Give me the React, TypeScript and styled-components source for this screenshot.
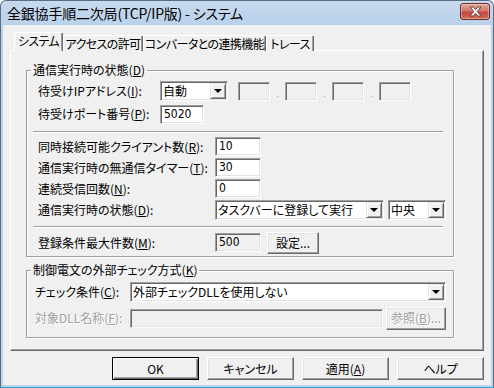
import React from "react";
import styled, { createGlobalStyle } from "styled-components";

const GlobalStyle = createGlobalStyle`
  html, body {
    margin: 0;
    padding: 0;
    background: #ffffff;
  }
  body {
    font-family: "Noto Sans CJK JP", "Noto Sans", sans-serif;
    font-size: 12px;
    font-feature-settings: "palt";
    color: #000;
  }
  u { text-decoration-thickness: 1px; text-underline-offset: 1px; }
`;

// window frame (win7 basic style)
const Window = styled.div`
  width: 494px;
  height: 388px;
  box-sizing: border-box;
  display: flex;
  flex-direction: column;
  border: 1px solid #5b6e83;
  border-bottom-color: #2aa6d6;
  border-radius: 6px 6px 0 0;
  background: linear-gradient(#c6d9ee, #b9d1ea 26px, #bcd4ec);
  padding: 0 2px 2px;
  overflow: hidden;
`;

const TitleBar = styled.div`
  height: 24px;
  flex: none;
  display: flex;
  align-items: center;
  justify-content: space-between;
  padding: 0 1px 0 4px;
`;

const Title = styled.span`
  font-size: 14px;
  line-height: 16px;
  letter-spacing: -0.2px;
`;

const CloseButton = styled.div`
  width: 30px;
  height: 17px;
  box-sizing: border-box;
  margin-top: -3px;
  border: 1px solid #6b2c26;
  border-radius: 3px;
  background: linear-gradient(#e4a598, #d07a6c 45%, #c2493d 55%, #cf6a5a);
  box-shadow: inset 0 0 0 1px rgba(255, 255, 255, 0.35);
  display: flex;
  align-items: center;
  justify-content: center;
`;

const Client = styled.div`
  flex: 1;
  background: #f0f0f0;
  display: flex;
  flex-direction: column;
  padding: 7px 7px 0;
`;

const TabStrip = styled.div`
  display: flex;
  align-items: flex-end;
  padding-left: 4px;
  height: 19px;
  margin-bottom: -1px;
  position: relative;
  z-index: 1;
`;

const Tab = styled.div<{ $w: number; $active?: boolean }>`
  width: ${(p) => p.$w}px;
  height: ${(p) => (p.$active ? 19 : 16)}px;
  box-sizing: border-box;
  background: #f0f0f0;
  border-top: 1px solid #ffffff;
  border-left: 1px solid #ffffff;
  border-right: 1px solid #696969;
  border-radius: 2px 2px 0 0;
  box-shadow: inset -1px 0 0 #a0a0a0;
  display: flex;
  align-items: center;
  justify-content: center;
  line-height: 14px;
  letter-spacing: -0.6px;
  padding-bottom: ${(p) => (p.$active ? 2 : 0)}px;
  white-space: nowrap;
`;

const Panel = styled.div`
  height: 301px;
  box-sizing: border-box;
  border: 1px solid;
  border-color: #ffffff #696969 #696969 #ffffff;
  box-shadow: inset -1px -1px 0 #a0a0a0;
  display: flex;
  flex-direction: column;
  padding-left: 15px;
`;

const Group = styled.fieldset<{ $mt: number }>`
  margin: ${(p) => p.$mt}px 0 0 0;
  width: 428px;
  box-sizing: border-box;
  padding: 0;
  min-width: 0;
  border: 1px solid #a0a0a0;
  box-shadow: 1px 1px 0 #ffffff, inset 1px 1px 0 #ffffff;
`;

const Legend = styled.legend`
  margin-left: 4px;
  padding: 0 2px;
  line-height: 14px;
  font-size: 12px;
`;

const GroupBody = styled.div<{ $pad: string }>`
  display: flex;
  flex-direction: column;
  padding: ${(p) => p.$pad};
`;

const Row = styled.div<{ $h: number; $mt?: number }>`
  height: ${(p) => p.$h}px;
  margin-top: ${(p) => p.$mt || 0}px;
  display: flex;
  align-items: center;
`;

const Label = styled.span<{ $w: number; $disabled?: boolean }>`
  width: ${(p) => p.$w}px;
  flex: none;
  white-space: nowrap;
  line-height: 14px;
  color: ${(p) => (p.$disabled ? "#a0a0a0" : "#000")};
  text-shadow: ${(p) => (p.$disabled ? "1px 1px 0 #ffffff" : "none")};
`;

const Etched = styled.div`
  height: 0;
  border-top: 1px solid #a0a0a0;
  border-bottom: 1px solid #ffffff;
  margin: 5px 10px 3px -5px;
`;

const Field = styled.div<{ $w: number; $gray?: boolean }>`
  width: ${(p) => p.$w}px;
  height: 19px;
  flex: none;
  box-sizing: border-box;
  border: 1px solid;
  border-color: #a0a0a0 #ffffff #ffffff #a0a0a0;
  box-shadow: inset 1px 1px 0 #696969, inset -1px -1px 0 #e3e3e3;
  background: ${(p) => (p.$gray ? "#f0f0f0" : "#ffffff")};
  padding-left: 3px;
  line-height: 17px;
  font-family: "DejaVu Sans Condensed", "Liberation Sans", sans-serif;
  font-size: 12px;
`;

const Dot = styled.span`
  width: 15px;
  flex: none;
  text-align: center;
  align-self: flex-end;
  line-height: 8px;
  font-size: 8px;
  color: #a0a0a0;
  padding-bottom: 4px;
`;

const IpGap = styled.span`
  width: 10px;
  flex: none;
`;

const Combo = styled.div<{ $w: number }>`
  width: ${(p) => p.$w}px;
  height: 20px;
  flex: none;
  box-sizing: border-box;
  border: 1px solid;
  border-color: #a0a0a0 #ffffff #ffffff #a0a0a0;
  box-shadow: inset 1px 1px 0 #696969, inset -1px -1px 0 #e3e3e3;
  background: #ffffff;
  display: flex;
  align-items: center;
  justify-content: space-between;
  padding: 2px 1px 2px 2px;
`;

const ComboText = styled.span`
  line-height: 14px;
  white-space: nowrap;
`;

const DropButton = styled.div`
  width: 16px;
  height: 16px;
  box-sizing: border-box;
  background: #f0f0f0;
  border: 1px solid;
  border-color: #e3e3e3 #696969 #696969 #e3e3e3;
  box-shadow: inset 1px 1px 0 #ffffff, inset -1px -1px 0 #a0a0a0;
  display: flex;
  align-items: center;
  justify-content: center;
`;

const Arrow = styled.span`
  width: 0;
  height: 0;
  border-left: 4px solid transparent;
  border-right: 4px solid transparent;
  border-top: 4px solid #000;
`;

const PushButton = styled.button<{ $w: number; $h: number; $default?: boolean }>`
  width: ${(p) => p.$w}px;
  height: ${(p) => p.$h}px;
  flex: none;
  box-sizing: border-box;
  margin: 0;
  padding: 0;
  background: #f0f0f0;
  font: inherit;
  font-size: 12px;
  line-height: 14px;
  color: ${(p) => (p.disabled ? "#a0a0a0" : "#000")};
  text-shadow: ${(p) => (p.disabled ? "1px 1px 0 #ffffff" : "none")};
  border: 1px solid;
  border-color: ${(p) =>
    p.$default ? "#000000" : "#ffffff #696969 #696969 #ffffff"};
  box-shadow: ${(p) =>
    p.$default
      ? "inset 1px 1px 0 #ffffff, inset -1px -1px 0 #696969, inset -2px -2px 0 #a0a0a0"
      : "inset -1px -1px 0 #a0a0a0, inset 1px 1px 0 #e3e3e3"};
`;

const Spacer = styled.span<{ $w: number }>`
  width: ${(p) => p.$w}px;
  flex: none;
`;

const ButtonRow = styled.div`
  display: flex;
  justify-content: flex-end;
  gap: 8px;
  margin-top: 6px;
`;

const tabs = [
  { label: "システム", w: 49 },
  { label: "アクセスの許可", w: 80 },
  { label: "コンバータとの連携機能", w: 123 },
  { label: "トレース", w: 48 },
];

function CloseGlyph() {
  return (
    <svg width="13" height="11" viewBox="0 0 13 11">
      <path
        d="M1 1h3.2L6.5 3.6 8.8 1H12L8.2 5.5 12 10H8.8L6.5 7.4 4.2 10H1l3.8-4.5z"
        fill="#ffffff"
        stroke="#5a3a36"
        strokeWidth="0.9"
        strokeLinejoin="round"
      />
    </svg>
  );
}

export default function App() {
  return (
    <>
      <GlobalStyle />
      <Window>
        <TitleBar>
          <Title>全銀協手順二次局(TCP/IP版) - システム</Title>
          <CloseButton>
            <CloseGlyph />
          </CloseButton>
        </TitleBar>
        <Client>
          <TabStrip>
            {tabs.map((t, i) => (
              <Tab key={t.label} $w={t.w} $active={i === 0}>
                {t.label}
              </Tab>
            ))}
          </TabStrip>
          <Panel>
            <Group $mt={12}>
              <Legend>
                通信実行時の状態(<u>D</u>)
              </Legend>
              <GroupBody $pad="3px 0 2px 11px">
                <Row $h={22}>
                  <Label $w={122}>
                    待受けIPアドレス(<u>I</u>):
                  </Label>
                  <Combo $w={68}>
                    <ComboText>自動</ComboText>
                    <DropButton>
                      <Arrow />
                    </DropButton>
                  </Combo>
                  <IpGap />
                  <Field $w={32} $gray />
                  <Dot>.</Dot>
                  <Field $w={32} $gray />
                  <Dot>.</Dot>
                  <Field $w={32} $gray />
                  <Dot>.</Dot>
                  <Field $w={32} $gray />
                </Row>
                <Row $h={24}>
                  <Label $w={122}>
                    待受けポート番号(<u>P</u>):
                  </Label>
                  <Field $w={44}>5020</Field>
                </Row>
                <Etched />
                <Row $h={21}>
                  <Label $w={177}>
                    同時接続可能クライアント数(<u>R</u>):
                  </Label>
                  <Field $w={46}>10</Field>
                </Row>
                <Row $h={21}>
                  <Label $w={177}>
                    通信実行時の無通信タイマー(<u>T</u>):
                  </Label>
                  <Field $w={46}>30</Field>
                </Row>
                <Row $h={21}>
                  <Label $w={177}>
                    連続受信回数(<u>N</u>):
                  </Label>
                  <Field $w={46}>0</Field>
                </Row>
                <Row $h={22}>
                  <Label $w={177}>
                    通信実行時の状態(<u>D</u>):
                  </Label>
                  <Combo $w={169}>
                    <ComboText>タスクバーに登録して実行</ComboText>
                    <DropButton>
                      <Arrow />
                    </DropButton>
                  </Combo>
                  <Spacer $w={4} />
                  <Combo $w={58}>
                    <ComboText>中央</ComboText>
                    <DropButton>
                      <Arrow />
                    </DropButton>
                  </Combo>
                </Row>
                <Etched />
                <Row $h={23}>
                  <Label $w={177}>
                    登録条件最大件数(<u>M</u>):
                  </Label>
                  <Field $w={46} $gray>
                    500
                  </Field>
                  <Spacer $w={6} />
                  <PushButton $w={52} $h={22}>
                    設定...
                  </PushButton>
                </Row>
              </GroupBody>
            </Group>
            <Group $mt={6}>
              <Legend>
                制御電文の外部チェック方式(<u>K</u>)
              </Legend>
              <GroupBody $pad="4px 0 6px 8px">
                <Row $h={22}>
                  <Label $w={95}>
                    チェック条件(<u>C</u>):
                  </Label>
                  <Combo $w={316}>
                    <ComboText>外部チェックDLLを使用しない</ComboText>
                    <DropButton>
                      <Arrow />
                    </DropButton>
                  </Combo>
                </Row>
                <Row $h={26} $mt={2}>
                  <Label $w={95} $disabled>
                    対象DLL名称(<u>F</u>):
                  </Label>
                  <Field $w={253} $gray />
                  <Spacer $w={3} />
                  <PushButton $w={60} $h={23} disabled>
                    参照(<u>B</u>)...
                  </PushButton>
                </Row>
              </GroupBody>
            </Group>
          </Panel>
          <ButtonRow>
            <PushButton $w={87} $h={23} $default>
              OK
            </PushButton>
            <PushButton $w={87} $h={23}>
              キャンセル
            </PushButton>
            <PushButton $w={87} $h={23}>
              適用(<u>A</u>)
            </PushButton>
            <PushButton $w={87} $h={23}>
              ヘルプ
            </PushButton>
          </ButtonRow>
        </Client>
      </Window>
    </>
  );
}
